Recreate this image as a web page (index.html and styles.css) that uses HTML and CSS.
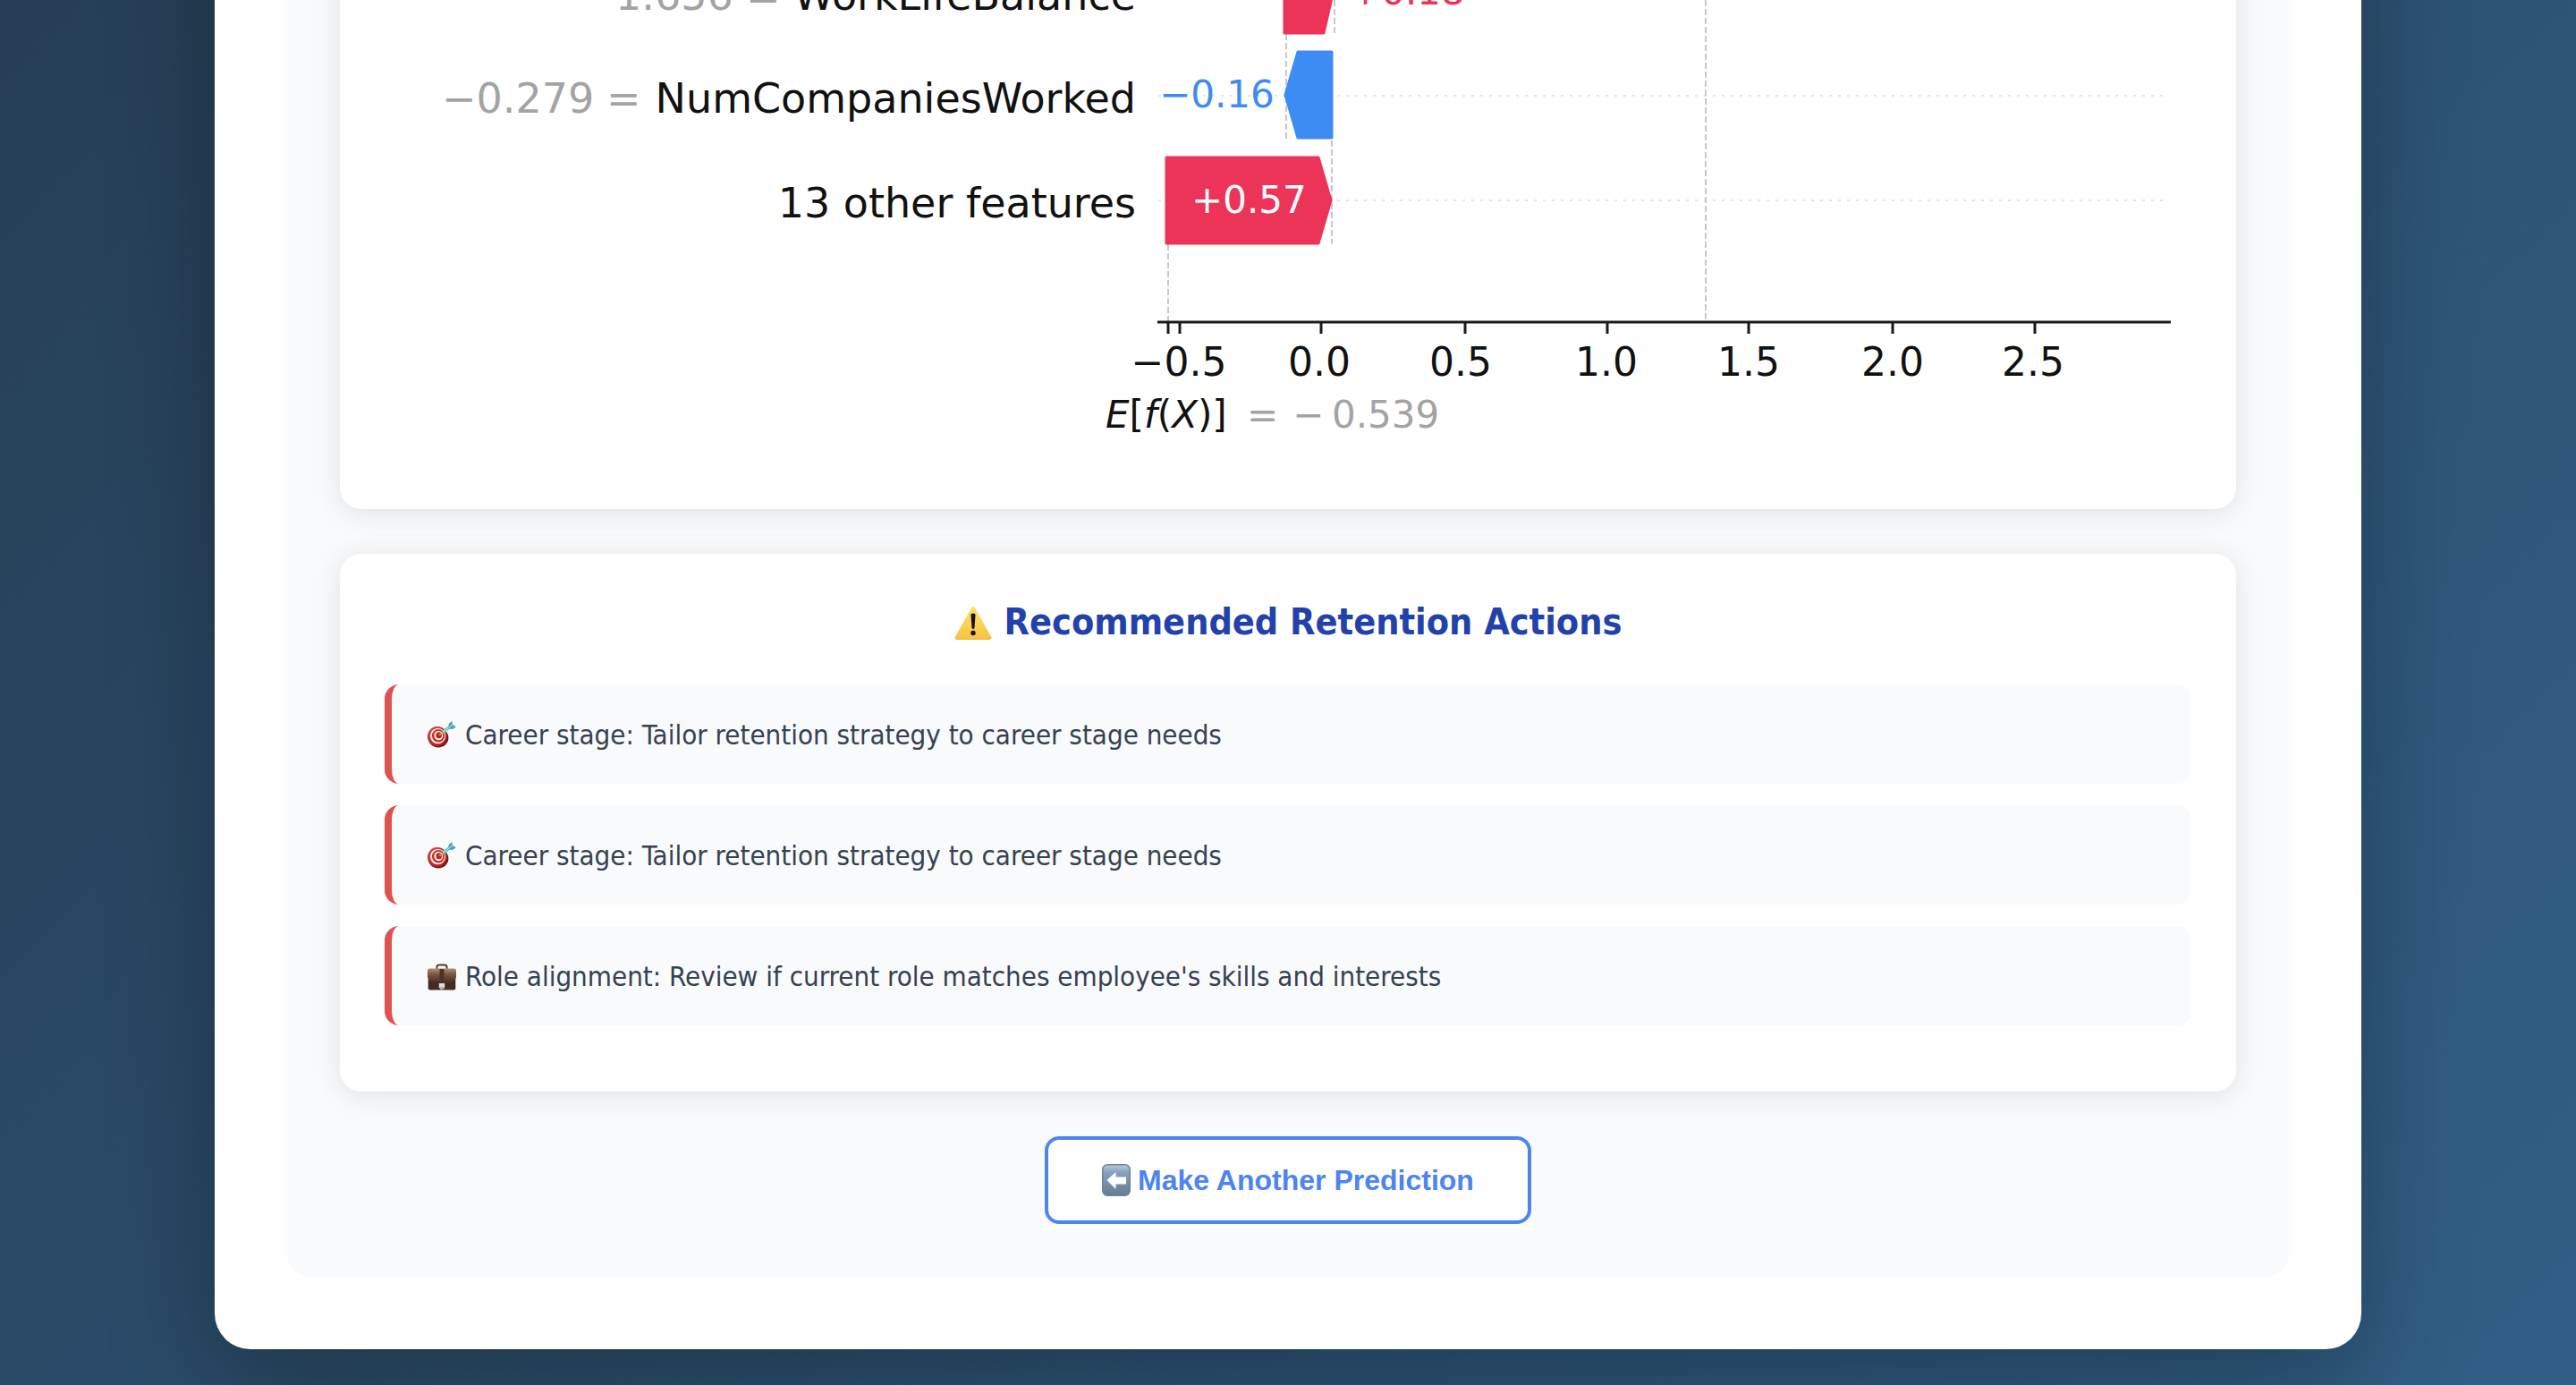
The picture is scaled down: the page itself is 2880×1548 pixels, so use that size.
FILE: index.html
```html
<!DOCTYPE html>
<html lang="en">
<head>
<meta charset="utf-8">
<meta name="viewport" content="width=device-width, initial-scale=1">
<title>Attrition Prediction</title>
<link rel="stylesheet" href="styles.css">
</head>
<body>
<svg class="sprite" aria-hidden="true">
  <defs>
    <linearGradient id="warn-fill" x1="0" y1="0" x2="0" y2="1"><stop offset="0" stop-color="#fde06a"/><stop offset="1" stop-color="#f9c440"/></linearGradient>
    <linearGradient id="bag-fill" x1="0" y1="0" x2="0" y2="1"><stop offset="0" stop-color="#b0917a"/><stop offset=".35" stop-color="#7b5a45"/><stop offset="1" stop-color="#43291e"/></linearGradient>
    <linearGradient id="key-fill" x1="0" y1="0" x2="0" y2="1"><stop offset="0" stop-color="#b9cad9"/><stop offset=".25" stop-color="#86a1bf"/><stop offset="1" stop-color="#667b92"/></linearGradient>
    <linearGradient id="board-fill" x1="0" y1="0" x2="1" y2="1"><stop offset="0" stop-color="#d8453c"/><stop offset="1" stop-color="#a01a1a"/></linearGradient>
    <symbol id="icon-target" viewBox="0 0 32 32">
      <ellipse cx="12" cy="18.600" rx="11.400" ry="10.800" fill="#6f1513"/>
      <ellipse cx="11" cy="17" rx="11" ry="11" fill="url(#board-fill)"/>
      <ellipse cx="11.500" cy="16.500" rx="8.600" ry="8.800" fill="#f7eeec"/>
      <ellipse cx="12" cy="16.300" rx="7.100" ry="7.200" fill="#c52d29"/>
      <ellipse cx="12.300" cy="16" rx="5" ry="5.200" fill="#f7eeec"/>
      <ellipse cx="12.700" cy="15.800" rx="3.300" ry="3.500" fill="#b32522"/>
      <path d="M13 15.500 19 12" stroke="#d9a42c" stroke-width="2"/>
      <path d="M17 13 18 9 24 5.500 25 8.500 20 12.500Z" fill="#5cc6d4"/>
      <path d="M23 7 24 2.500 27.500 0 27.800 3.500 31.800 6.500 28 9 24 8.500Z" fill="#4ba6ad"/>
      <path d="M17.500 12 28 4" stroke="#b7edf0" stroke-width="1"/>
    </symbol>
    <symbol id="icon-briefcase" viewBox="0 0 32 32">
      <path d="M10.500 7V4.500Q10.500 2.500 13 2.500H19Q21.500 2.500 21.500 4.500V7" fill="none" stroke="#5b3d2f" stroke-width="2"/>
      <path d="M.700 14H31.300V28.500Q31.300 30.500 29.500 30.500H2.500Q.700 30.500 .700 28.500Z" fill="#452c21"/>
      <path d="M2 6.500H30Q32 6.500 32 8.500V16Q29 23.500 21 23.500H11Q3 23.500 0 16V8.500Q0 6.500 2 6.500Z" fill="url(#bag-fill)"/>
      <rect x="13.500" y="7" width="5" height="14" fill="#4e3427"/>
      <path d="M12.800 23H19.200V27.500L17.500 29.500H14.500L12.800 27.500Z" fill="#dedfdc"/>
      <path d="M14 27H18V29.500H14Z" fill="#b4b6b4"/>
    </symbol>
  </defs>
</svg>

<main class="container">
  <div class="results">
    <section class="card">
      <svg class="chart" viewBox="430 -10 2020 529" role="img" aria-label="Feature contributions to the prediction">
        <g class="row-guides">
          <path d="M1295 107H2418M1295 224H2418"/>
        </g>
        <g class="value-guides">
          <path d="M1907-10V360M1492-10V38M1438 38V155M1489 57V273M1306 273V360"/>
        </g>
        <path class="bar-up" d="M1436-60H1480L1491-11 1480 37H1436Z"/>
        <path class="bar-down" d="M1489 58V154H1451L1437 106 1451 58Z"/>
        <path class="bar-up" d="M1304 176H1474L1488 224 1474 272H1304Z"/>

        <g class="feature">
          <text class="muted" x="688" y="11">1.656</text>
          <text class="muted" x="834" y="11">=</text>
          <text class="end" x="1270" y="11">WorkLifeBalance</text>
          <text class="muted" x="494" y="126">−0.279</text>
          <text class="muted" x="678" y="126">=</text>
          <text class="end" x="1270" y="126">NumCompaniesWorked</text>
          <text class="end" x="1270" y="243">13 other features</text>
        </g>

        <g class="amount">
          <text class="up" x="1509" y="5">+0.18</text>
          <text class="down" x="1296" y="120">−0.16</text>
          <text class="inside" x="1332" y="238">+0.57</text>
        </g>

        <path class="axis" d="M1294 360H2427"/>
        <path class="ticks" d="M1306 360V373M1319 360V373M1477 360V373M1638 360V373M1797 360V373M1955 360V373M2116 360V373M2275 360V373"/>
        <g class="tick-label">
          <text x="1318" y="420">−0.5</text>
          <text x="1475" y="420">0.0</text>
          <text x="1633" y="420">0.5</text>
          <text x="1796" y="420">1.0</text>
          <text x="1955" y="420">1.5</text>
          <text x="2116" y="420">2.0</text>
          <text x="2273" y="420">2.5</text>
        </g>
        <g class="amount">
          <text x="1236" y="478"><tspan class="var">E</tspan>[<tspan class="var">f</tspan>(<tspan class="var">X</tspan>)]</text>
          <text class="muted" x="1394" y="478">=</text>
          <text class="muted" x="1445" y="478">−</text>
          <text class="muted" x="1489" y="478">0.539</text>
        </g>
      </svg>
    </section>

    <section class="card">
      <h2 class="card-title">
        <svg class="title-icon" viewBox="0 0 42 42" aria-hidden="true">
          <path d="M19 4.500Q21 1.500 23 4.500L41 36.500Q42 39.500 39 39.500H3Q0 39.500 1 36.500Z" fill="url(#warn-fill)"/>
          <path d="M1 37Q1 39.500 3 39.500H39Q41 39.500 41 37" fill="none" stroke="#e8b355" stroke-width="1"/>
          <path d="M18.500 12Q18.500 10.500 21 10.500T23.500 12L22.500 27Q21 29 19.500 27Z" fill="#151203"/>
          <circle cx="21" cy="32.500" r="2.700" fill="#151203"/>
        </svg>
        Recommended Retention Actions
      </h2>
      <ul class="actions">
        <li class="action"><svg class="action-icon" aria-hidden="true"><use href="#icon-target"/></svg>Career stage: Tailor retention strategy to career stage needs</li>
        <li class="action"><svg class="action-icon" aria-hidden="true"><use href="#icon-target"/></svg>Career stage: Tailor retention strategy to career stage needs</li>
        <li class="action"><svg class="action-icon" aria-hidden="true"><use href="#icon-briefcase"/></svg>Role alignment: Review if current role matches employee's skills and interests</li>
      </ul>
    </section>

    <button class="again" type="button">
      <svg class="again-icon" viewBox="0 0 32 36" aria-hidden="true">
        <rect x=".750" y=".750" width="30.500" height="34.500" rx="5.500" fill="url(#key-fill)" stroke="#6d8499" stroke-width="1.500"/>
        <path d="M5.500 18 15.500 9V14.500H27V22.500H15.500V28Z" fill="#fff"/>
      </svg>
      Make Another Prediction
    </button>
  </div>
</main>
</body>
</html>
```
FILE: styles.css
```css
* {
  box-sizing: border-box;
}

html {
  min-height: 100%;
  background: linear-gradient(135deg, #263f56 0%, #325f86 100%);
}

body {
  margin: 0;
  padding: 0 40px 40px;
  overflow-x: hidden;
  font-family: "DejaVu Sans Condensed", "DejaVu Sans", sans-serif;
  color: #374151;
}

.sprite {
  position: absolute;
  width: 0;
  height: 0;
}

.container {
  max-width: 2400px;
  margin: -200px auto 0;
  padding: 80px;
  background: #fff;
  border-radius: 40px;
  box-shadow: 0 40px 120px rgba(0, 0, 0, 0.3);
}

.results {
  display: flex;
  flex-direction: column;
  gap: 50px;
  padding: 60px;
  background: #f8fafc;
  border-radius: 30px;
}

.card {
  padding: 50px;
  background: #fff;
  border-radius: 24px;
  box-shadow: 0 4px 30px rgba(0, 0, 0, 0.1);
}

/* Chart */
.chart {
  display: block;
  width: 100%;
  font-family: "DejaVu Sans", sans-serif;
  fill: #111;
}

.row-guides {
  fill: none;
  stroke: #e4e4e4;
  stroke-width: 2;
  stroke-dasharray: 3 7;
}

.value-guides {
  fill: none;
  stroke: #c8c8c8;
  stroke-width: 2;
  stroke-dasharray: 7 3;
}

.bar-up,
.up {
  fill: #ec3358;
}

.bar-down,
.down {
  fill: #3c8cf4;
}

.bar-up {
  stroke: #ec3358;
  stroke-width: 3;
  stroke-linejoin: round;
}

.bar-down {
  stroke: #3c8cf4;
  stroke-width: 3;
  stroke-linejoin: round;
}

.inside {
  fill: #fff;
}

.muted {
  fill: #a3a3a3;
}

.feature {
  font-size: 46px;
}

.end {
  text-anchor: end;
}

.amount {
  font-size: 42px;
}

.tick-label {
  font-size: 44px;
  text-anchor: middle;
}

.var {
  font-style: italic;
}

.axis {
  stroke: #1a1a1a;
  stroke-width: 3;
}

.ticks {
  stroke: #1a1a1a;
  stroke-width: 3;
}

/* Recommended actions */
.card-title {
  display: flex;
  align-items: center;
  justify-content: center;
  gap: 14px;
  margin: 0 0 43px;
  font-size: 41px;
  line-height: 53px;
  color: #2341ab;
}

.title-icon {
  width: 42px;
  height: 42px;
}

.actions {
  display: flex;
  flex-direction: column;
  gap: 24px;
  margin: 0 0 24px;
  padding: 0;
  list-style: none;
}

.action {
  display: flex;
  align-items: center;
  gap: 10px;
  padding: 33px 40px 31px;
  background: #f8fafc;
  border-left: 8px solid #de524f;
  border-radius: 16px;
  font-size: 31px;
  line-height: 47px;
}

.action-icon {
  flex: none;
  width: 32px;
  height: 32px;
}

.again {
  display: flex;
  align-items: center;
  align-self: center;
  gap: 8px;
  padding: 26px 60px;
  background: #fff;
  border: 4px solid #4c84f0;
  border-radius: 16px;
  font: bold 32px/38px "Liberation Sans", Arial, sans-serif;
  color: #4c84f0;
}

.again-icon {
  width: 32px;
  height: 36px;
}
```
